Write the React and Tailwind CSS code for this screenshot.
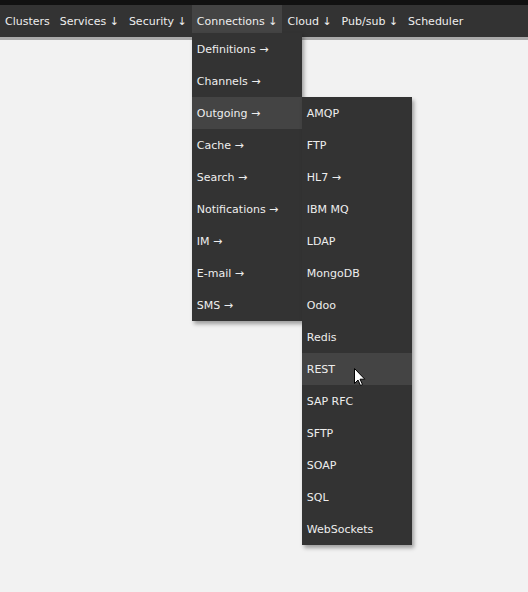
import React from "react";

const nav = [
  { label: "Clusters" },
  { label: "Services ↓" },
  { label: "Security ↓" },
  { label: "Connections ↓", active: true },
  { label: "Cloud ↓" },
  { label: "Pub/sub ↓" },
  { label: "Scheduler" },
];

const menu1 = [
  "Definitions →",
  "Channels →",
  "Outgoing →",
  "Cache →",
  "Search →",
  "Notifications →",
  "IM →",
  "E-mail →",
  "SMS →",
];

const menu2 = [
  "AMQP",
  "FTP",
  "HL7 →",
  "IBM MQ",
  "LDAP",
  "MongoDB",
  "Odoo",
  "Redis",
  "REST",
  "SAP RFC",
  "SFTP",
  "SOAP",
  "SQL",
  "WebSockets",
];

export default function App() {
  return (
    <div
      className="relative min-h-[592px] bg-[#f2f2f2] text-[11px] text-[#eeeeee]"
      style={{ fontFamily: '"DejaVu Sans", Verdana, sans-serif' }}
    >
      <div className="h-[5px] bg-[#111111]" />
      <div className="relative h-[32px] bg-[#333333] shadow-[0_3px_0_#aaaaaa] z-10">
        <ul className="flex">
          {nav.map((n) => (
            <li
              key={n.label}
              className={`relative h-[28px] px-[5px] pt-[1px] leading-[31px] whitespace-nowrap ${
                n.active ? "bg-[#444444]" : ""
              }`}
            >
              {n.label}
              {n.active && (
                <ul className="absolute left-0 top-[28px] w-[110px] bg-[#333333] shadow-[2px_3px_4px_rgba(0,0,0,0.35)] z-20">
                  {menu1.map((m) => (
                    <li
                      key={m}
                      className={`relative h-[32px] px-[5px] pt-[2px] leading-[30px] ${
                        m === "Outgoing →" ? "bg-[#444444]" : ""
                      }`}
                    >
                      {m}
                      {m === "Outgoing →" && (
                        <ul className="absolute left-[110px] top-0 w-[110px] bg-[#333333] shadow-[2px_3px_4px_rgba(0,0,0,0.35)]">
                          {menu2.map((s) => (
                            <li
                              key={s}
                              className={`relative h-[32px] px-[5px] pt-[2px] leading-[30px] ${
                                s === "REST" ? "bg-[#444444]" : ""
                              }`}
                            >
                              {s}
                              {s === "REST" && (
                                <svg
                                  className="absolute left-[52px] top-[15px]"
                                  width="12"
                                  height="19"
                                  viewBox="0 0 12 19"
                                >
                                  <path
                                    d="M0.5 0.5 L0.5 15.5 L4 12 L6.5 17.5 L8.5 16.5 L6 11.2 L10.8 11.2 Z"
                                    fill="#ffffff"
                                    stroke="#000000"
                                    strokeWidth="1"
                                  />
                                </svg>
                              )}
                            </li>
                          ))}
                        </ul>
                      )}
                    </li>
                  ))}
                </ul>
              )}
            </li>
          ))}
        </ul>
      </div>
    </div>
  );
}
